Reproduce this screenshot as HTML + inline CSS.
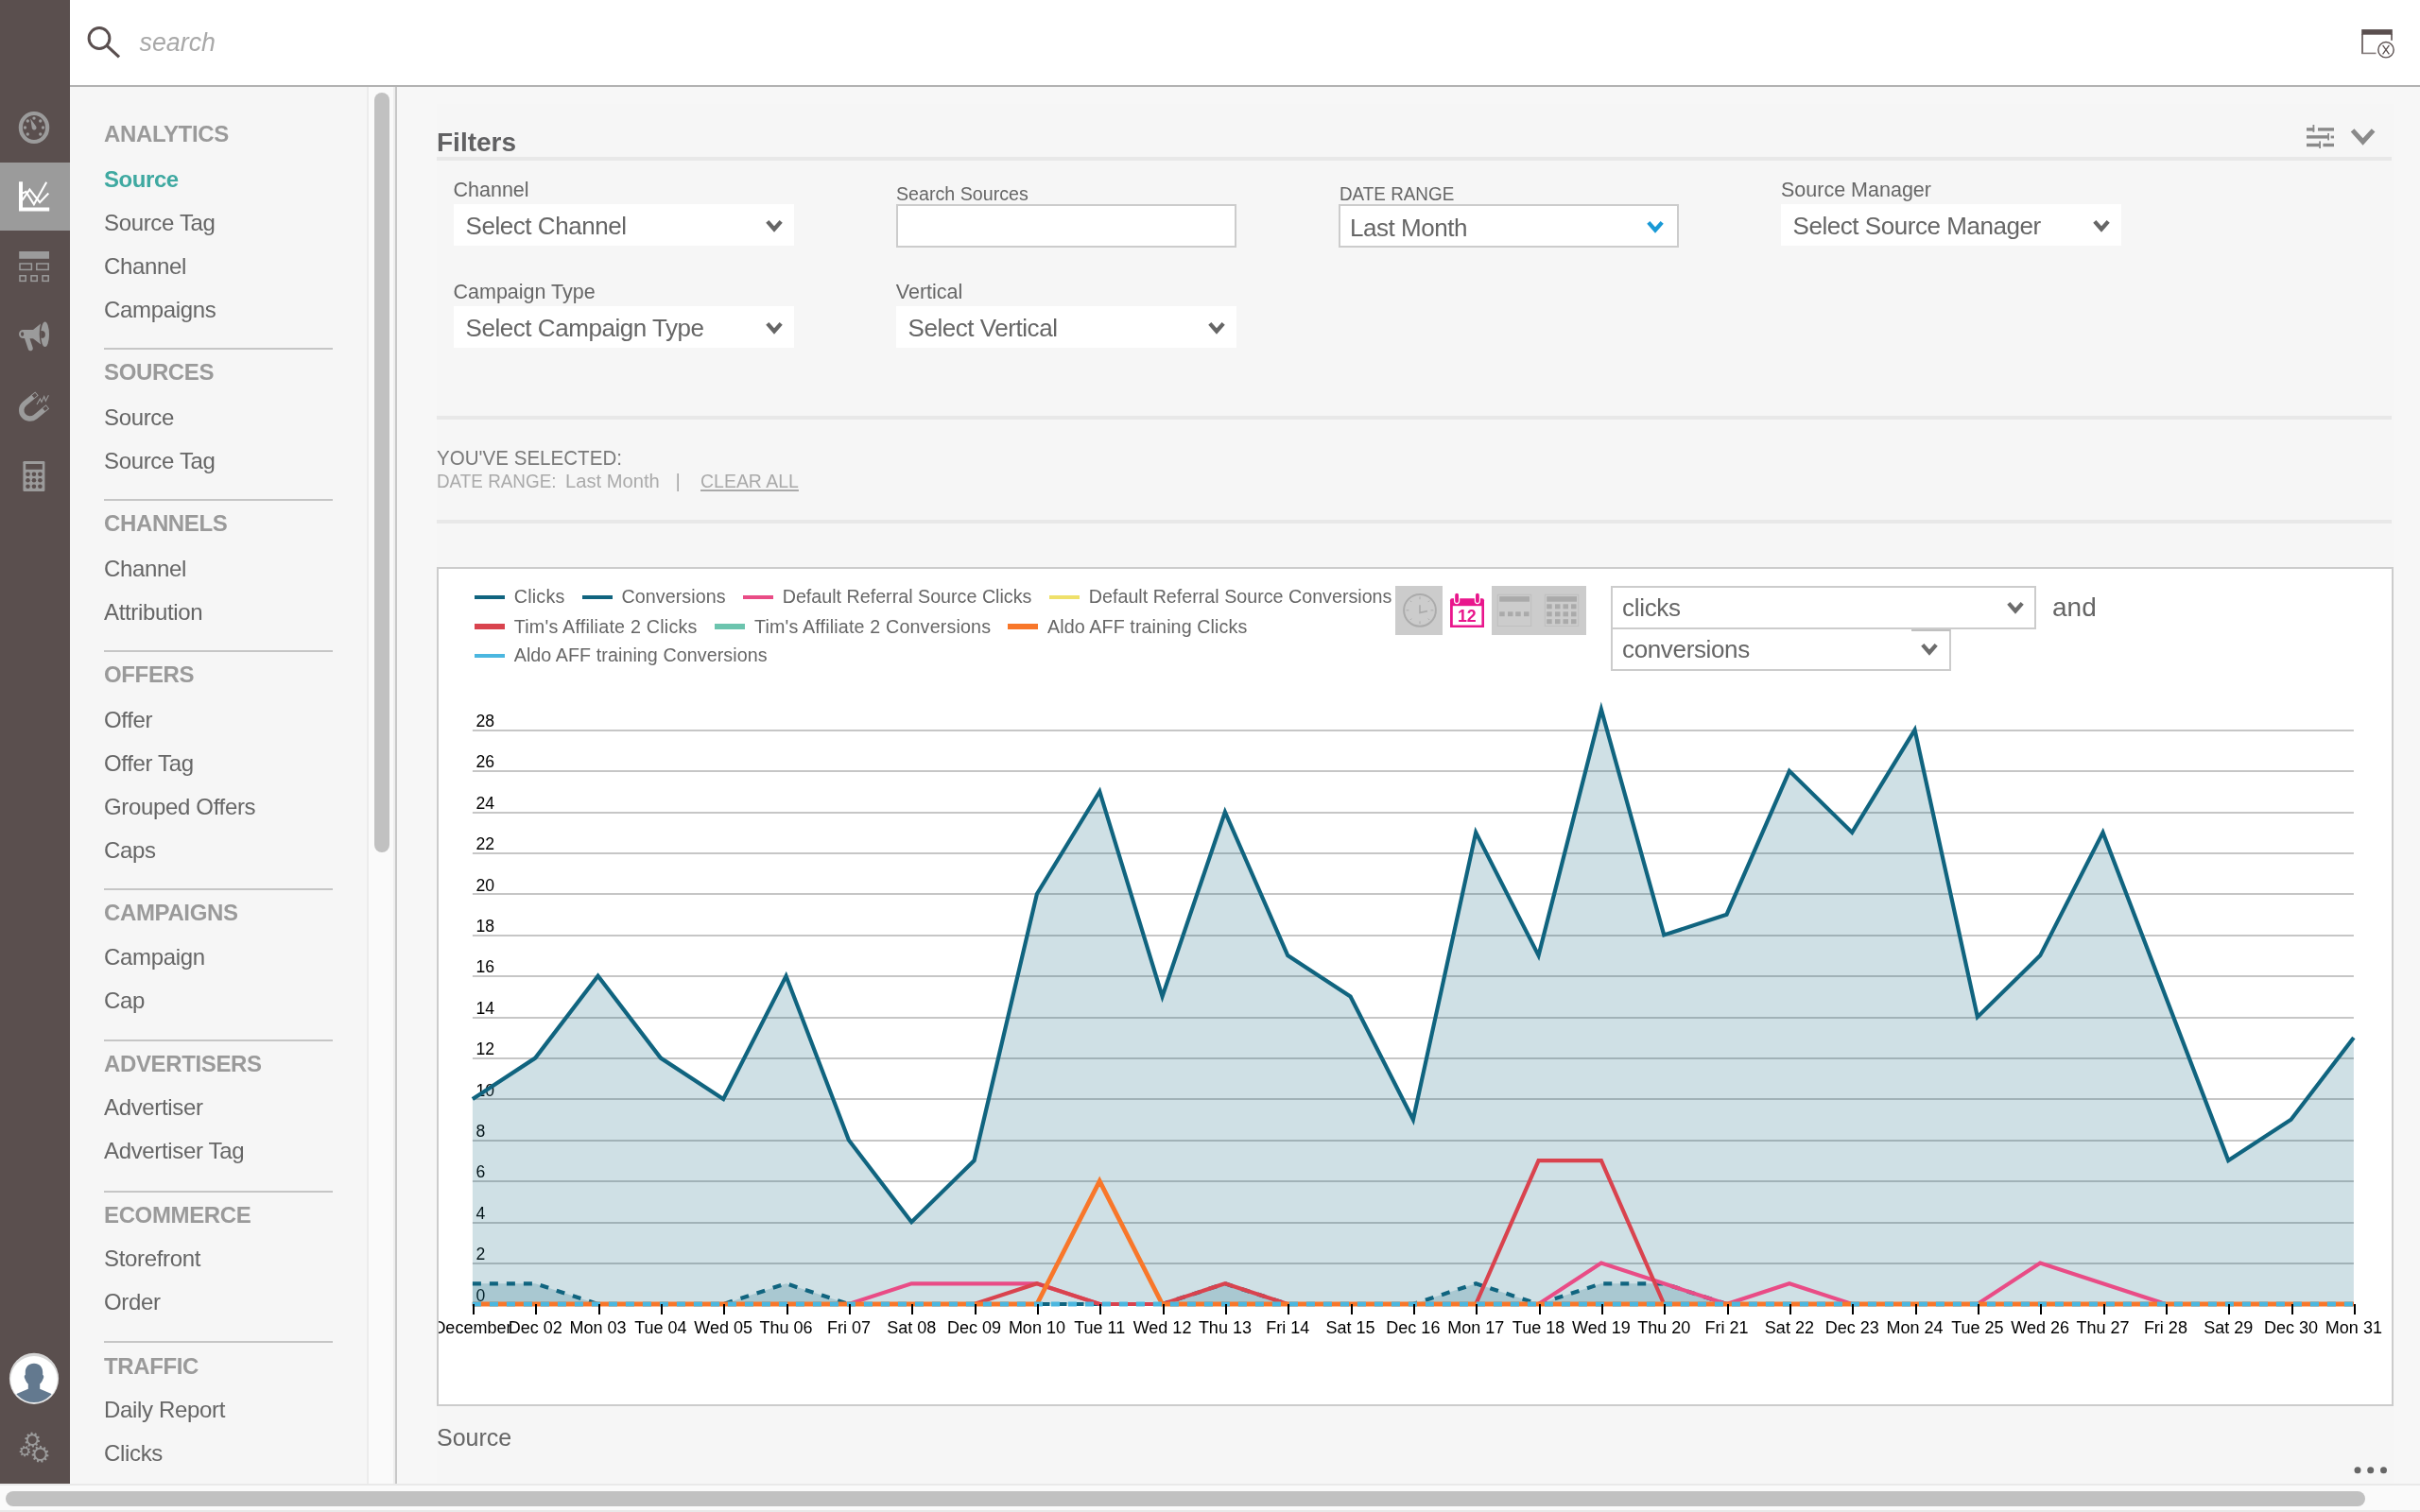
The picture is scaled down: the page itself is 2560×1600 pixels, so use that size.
<!DOCTYPE html>
<html><head><meta charset="utf-8"><title>Analytics - Source</title>
<style>
html,body{margin:0;padding:0;}
body{width:2560px;height:1600px;overflow:hidden;background:#f6f6f6;font-family:"Liberation Sans",sans-serif;position:relative;}
div{box-sizing:border-box;}
svg{position:absolute;overflow:visible;}
</style></head><body><div id="root" style="position:absolute;left:0;top:0;width:2560px;height:1600px;will-change:transform;">

<div style="position:absolute;left:74px;top:0px;width:2486px;height:90px;background:#ffffff;"></div>
<div style="position:absolute;left:74px;top:90px;width:2486px;height:2px;background:#b2b2b2;"></div>
<svg style="left:80px;top:20px" width="60" height="50" viewBox="80 20 60 50"><circle cx="105" cy="40.5" r="10.9" fill="none" stroke="#5a4f4f" stroke-width="3"/><line x1="113.3" y1="48.6" x2="126" y2="60.4" stroke="#5a4f4f" stroke-width="3.2"/></svg>
<div style="position:absolute;top:28px;font-size:26.8px;line-height:34px;color:#a9a9a9;white-space:nowrap;font-style:italic;left:147.5px;">search</div>
<svg style="left:2490px;top:24px" width="50" height="46" viewBox="2490 24 50 46">
<rect x="2498.2" y="31.1" width="32.6" height="5.6" fill="#5a4f4f"/>
<line x1="2499" y1="36" x2="2499" y2="57" stroke="#5a4f4f" stroke-width="1.6"/>
<line x1="2530" y1="36" x2="2530" y2="42.8" stroke="#5a4f4f" stroke-width="1.6"/>
<line x1="2498.2" y1="56.4" x2="2513.5" y2="56.4" stroke="#857c7c" stroke-width="1.6"/>
<circle cx="2524" cy="52.7" r="8.2" fill="#fff" stroke="#5a4f4f" stroke-width="1.4"/>
<path d="M2520.6 47.8 L2527.4 57.4 M2527.4 47.8 L2520.6 57.4" stroke="#5a4f4f" stroke-width="1.3" fill="none"/>
</svg>
<div style="position:absolute;left:0px;top:0px;width:74px;height:1570px;background:#5a4f4e;"></div>
<div style="position:absolute;left:0px;top:172px;width:74px;height:72px;background:#9b9b9b;"></div>
<svg style="left:10px;top:110px" width="54" height="54" viewBox="10 110 54 54">
<ellipse cx="36" cy="135" rx="14.15" ry="15.0" fill="none" stroke="#9b9b9b" stroke-width="4.2"/><circle cx="36.00" cy="125.10" r="1.7" fill="#9b9b9b"/><circle cx="42.72" cy="128.00" r="1.7" fill="#9b9b9b"/><circle cx="45.50" cy="135.00" r="1.7" fill="#9b9b9b"/><circle cx="42.72" cy="142.00" r="1.7" fill="#9b9b9b"/><circle cx="29.28" cy="142.00" r="1.7" fill="#9b9b9b"/><circle cx="26.50" cy="135.00" r="1.7" fill="#9b9b9b"/><circle cx="29.28" cy="128.00" r="1.7" fill="#9b9b9b"/>
<path d="M32.2 125.6 L38 133.6 A2.4 2.4 0 1 1 33.8 135.6 Z" fill="#9b9b9b"/>
</svg>
<svg style="left:10px;top:180px" width="54" height="54" viewBox="10 180 54 54">
<path d="M20 192.2 H24 V219.6 H52.2 V223.6 H20 Z" fill="#fff"/>
<path d="M23.5 204.6 L27.5 202.9 L35.9 216.3 L49.2 192.8" fill="none" stroke="#fff" stroke-width="2.1"/>
<path d="M23.5 212 L31.4 200.6 L42.1 214.2 L51.3 204.6" fill="none" stroke="#fff" stroke-width="2.1"/>
</svg>
<svg style="left:10px;top:255px" width="54" height="54" viewBox="10 255 54 54">
<rect x="20.2" y="266" width="31.8" height="7.8" fill="#9b9b9b"/>
<rect x="21" y="279" width="12.4" height="6.4" fill="none" stroke="#9b9b9b" stroke-width="1.5"/>
<rect x="38.8" y="279" width="12.4" height="6.4" fill="none" stroke="#9b9b9b" stroke-width="1.5"/>
<rect x="21" y="291.8" width="6.2" height="5.6" fill="none" stroke="#9b9b9b" stroke-width="1.5"/>
<rect x="33" y="291.8" width="6.2" height="5.6" fill="none" stroke="#9b9b9b" stroke-width="1.5"/>
<rect x="45" y="291.8" width="6.2" height="5.6" fill="none" stroke="#9b9b9b" stroke-width="1.5"/>
</svg>
<svg style="left:10px;top:328px" width="54" height="54" viewBox="10 328 54 54">
<path d="M24.5 349 H35 L43 342.5 C41.2 350 41.2 357 43.2 364.5 L35 358.2 H31.5 L34.8 368.2 A2.6 2.6 0 0 1 30 370 L26 358 H24.5 A4.5 4.5 0 0 1 24.5 349 Z" fill="#9b9b9b"/>
<ellipse cx="23.6" cy="353.5" rx="1.6" ry="2.2" fill="#5a4f4e"/>
<ellipse cx="47.6" cy="353.8" rx="4.4" ry="13.2" fill="#9b9b9b"/>
<path d="M43.2 350 H44 A3.9 3.9 0 0 1 44 357.8 H43.2 Z" fill="#5a4f4e"/>
</svg>
<svg style="left:10px;top:402px" width="54" height="54" viewBox="10 402 54 54">
<g transform="translate(31.7,434.1) rotate(-39.4)">
<path d="M0 -11.7 H16.8 V-6.249999999999999 H0 A6.249999999999999 6.249999999999999 0 0 0 0 6.249999999999999 H16.8 V11.7 H0 A11.7 11.7 0 0 1 0 -11.7 Z" fill="#9b9b9b"/>
<rect x="11.6" y="-10.799999999999999" width="4.300000000000001" height="3.6500000000000004" fill="#5a4f4e"/>
<rect x="11.6" y="7.1499999999999995" width="4.300000000000001" height="3.6500000000000004" fill="#5a4f4e"/>
</g>
<path d="M39 428.1 L42.45 422 L44 425.5 L46.7 419.6 L48.3 424.4 L51.4 418.2" fill="none" stroke="#9b9b9b" stroke-width="1.1"/>
</svg>
<svg style="left:10px;top:476px" width="54" height="54" viewBox="10 476 54 54">
<rect x="24.4" y="488" width="23" height="32" rx="1.2" fill="#9b9b9b"/>
<rect x="27.2" y="491" width="17.6" height="5.8" fill="#5a4f4e"/><circle cx="29.50" cy="501.80" r="2.3" fill="#5a4f4e"/><circle cx="35.95" cy="501.80" r="2.3" fill="#5a4f4e"/><circle cx="42.40" cy="501.80" r="2.3" fill="#5a4f4e"/><circle cx="29.50" cy="508.25" r="2.3" fill="#5a4f4e"/><circle cx="35.95" cy="508.25" r="2.3" fill="#5a4f4e"/><circle cx="42.40" cy="508.25" r="2.3" fill="#5a4f4e"/><circle cx="29.50" cy="514.70" r="2.3" fill="#5a4f4e"/><circle cx="35.95" cy="514.70" r="2.3" fill="#5a4f4e"/><circle cx="42.40" cy="514.70" r="2.3" fill="#5a4f4e"/>
</svg>
<svg style="left:8px;top:1430px" width="58" height="58" viewBox="8 1430 58 58">
<defs><clipPath id="av"><ellipse cx="36" cy="1459.6" rx="24.4" ry="24.4"/></clipPath></defs>
<ellipse cx="36" cy="1458.8" rx="26.1" ry="27.1" fill="#d6d6d6"/>
<ellipse cx="36" cy="1459.9" rx="24.8" ry="24.9" fill="#ffffff"/>
<g clip-path="url(#av)" fill="#63798f">
<path d="M36 1442.8 C41.6 1442.8 45.2 1446.6 45.2 1452 L45.2 1455 C46.4 1455 46.6 1457.2 45.6 1459 C44.8 1461.4 43.6 1463.4 42.2 1464.4 L42.2 1469.8 L58 1476.6 L58 1490 L14 1490 L14 1476.6 L29.8 1469.8 L29.8 1464.4 C28.4 1463.4 27.2 1461.4 26.4 1459 C25.4 1457.2 25.6 1455 26.8 1455 L26.8 1452 C26.8 1446.6 30.4 1442.8 36 1442.8 Z"/>
</g></svg>
<svg style="left:10px;top:1505px" width="54" height="54" viewBox="10 1505 54 54"><path d="M40.40 1523.60 L42.15 1524.50 L41.81 1526.07 L39.84 1526.17 L39.22 1527.24 L40.10 1529.00 L38.90 1530.07 L37.25 1529.00 L36.12 1529.50 L35.80 1531.44 L34.20 1531.60 L33.50 1529.76 L32.28 1529.50 L30.88 1530.88 L29.50 1530.07 L30.01 1528.17 L29.18 1527.24 L27.24 1527.54 L26.59 1526.07 L28.12 1524.84 L28.00 1523.60 L26.25 1522.70 L26.59 1521.13 L28.56 1521.03 L29.18 1519.96 L28.30 1518.20 L29.50 1517.13 L31.15 1518.20 L32.28 1517.70 L32.60 1515.76 L34.20 1515.60 L34.90 1517.44 L36.12 1517.70 L37.52 1516.32 L38.90 1517.13 L38.39 1519.03 L39.22 1519.96 L41.16 1519.66 L41.81 1521.13 L40.28 1522.36 Z M38.6 1523.6 A4.4 4.4 0 1 0 29.800000000000004 1523.6 A4.4 4.4 0 1 0 38.6 1523.6 Z" fill="#9b9b9b" fill-rule="evenodd"/><path d="M30.80 1535.60 L32.15 1536.33 L31.85 1537.58 L30.31 1537.61 L29.77 1538.43 L30.34 1539.86 L29.30 1540.62 L28.11 1539.66 L27.16 1539.93 L26.68 1541.39 L25.39 1541.31 L25.10 1539.80 L24.20 1539.41 L22.89 1540.22 L21.96 1539.33 L22.70 1537.98 L22.27 1537.10 L20.74 1536.88 L20.60 1535.60 L22.03 1535.05 L22.27 1534.10 L21.24 1532.95 L21.96 1531.87 L23.41 1532.37 L24.20 1531.79 L24.15 1530.25 L25.39 1529.89 L26.19 1531.21 L27.16 1531.27 L28.12 1530.06 L29.30 1530.58 L29.06 1532.10 L29.77 1532.77 L31.28 1532.46 L31.85 1533.62 L30.69 1534.63 Z M29.299999999999997 1535.6 A2.9 2.9 0 1 0 23.5 1535.6 A2.9 2.9 0 1 0 29.299999999999997 1535.6 Z" fill="#9b9b9b" fill-rule="evenodd"/><path d="M49.60 1538.80 L51.55 1539.72 L51.24 1541.34 L49.08 1541.45 L48.49 1542.58 L49.63 1544.42 L48.49 1545.60 L46.62 1544.53 L45.51 1545.17 L45.48 1547.33 L43.88 1547.71 L42.88 1545.79 L41.60 1545.73 L40.41 1547.53 L38.86 1546.99 L39.05 1544.84 L38.02 1544.09 L36.04 1544.96 L35.03 1543.67 L36.35 1541.96 L35.88 1540.77 L33.75 1540.44 L33.60 1538.80 L35.64 1538.08 L35.88 1536.83 L34.27 1535.39 L35.03 1533.93 L37.13 1534.43 L38.02 1533.51 L37.44 1531.43 L38.86 1530.61 L40.36 1532.17 L41.60 1531.87 L42.24 1529.81 L43.88 1529.89 L44.30 1532.01 L45.51 1532.43 L47.16 1531.04 L48.49 1532.00 L47.70 1534.01 L48.49 1535.02 L50.63 1534.74 L51.24 1536.26 L49.48 1537.53 Z M47.800000000000004 1538.8 A5.2 5.2 0 1 0 37.4 1538.8 A5.2 5.2 0 1 0 47.800000000000004 1538.8 Z" fill="#9b9b9b" fill-rule="evenodd"/></svg>
<div style="position:absolute;left:388px;top:92px;width:2px;height:1478px;background:#ececec;"></div>
<div style="position:absolute;left:390px;top:92px;width:26px;height:1478px;background:#fafafa;"></div>
<div style="position:absolute;left:396px;top:98px;width:16px;height:804px;background:#c1c1c1;border-radius:8px;"></div>
<div style="position:absolute;left:416px;top:92px;width:2px;height:1478px;background:#eeeeee;"></div>
<div style="position:absolute;left:418px;top:92px;width:2px;height:1478px;background:#c8c8c8;"></div>
<div style="position:absolute;top:126px;font-size:24px;line-height:31px;color:#9a9a9a;white-space:nowrap;font-weight:bold;letter-spacing:-0.37px;left:110px;">ANALYTICS</div>
<div style="position:absolute;top:174px;font-size:24px;line-height:31px;color:#3fa9a1;white-space:nowrap;font-weight:bold;letter-spacing:-0.44px;left:110px;">Source</div>
<div style="position:absolute;top:220px;font-size:24px;line-height:31px;color:#666;white-space:nowrap;letter-spacing:-0.34px;left:110px;">Source Tag</div>
<div style="position:absolute;top:266px;font-size:24px;line-height:31px;color:#666;white-space:nowrap;letter-spacing:-0.34px;left:110px;">Channel</div>
<div style="position:absolute;top:312px;font-size:24px;line-height:31px;color:#666;white-space:nowrap;letter-spacing:-0.34px;left:110px;">Campaigns</div>
<div style="position:absolute;left:110px;top:368px;width:242px;height:2px;background:#c6c6c6;"></div>
<div style="position:absolute;top:378px;font-size:24px;line-height:31px;color:#9a9a9a;white-space:nowrap;font-weight:bold;letter-spacing:-0.37px;left:110px;">SOURCES</div>
<div style="position:absolute;top:426px;font-size:24px;line-height:31px;color:#666;white-space:nowrap;letter-spacing:-0.34px;left:110px;">Source</div>
<div style="position:absolute;top:472px;font-size:24px;line-height:31px;color:#666;white-space:nowrap;letter-spacing:-0.34px;left:110px;">Source Tag</div>
<div style="position:absolute;left:110px;top:528px;width:242px;height:2px;background:#c6c6c6;"></div>
<div style="position:absolute;top:538px;font-size:24px;line-height:31px;color:#9a9a9a;white-space:nowrap;font-weight:bold;letter-spacing:-0.37px;left:110px;">CHANNELS</div>
<div style="position:absolute;top:586px;font-size:24px;line-height:31px;color:#666;white-space:nowrap;letter-spacing:-0.34px;left:110px;">Channel</div>
<div style="position:absolute;top:632px;font-size:24px;line-height:31px;color:#666;white-space:nowrap;letter-spacing:-0.34px;left:110px;">Attribution</div>
<div style="position:absolute;left:110px;top:688px;width:242px;height:2px;background:#c6c6c6;"></div>
<div style="position:absolute;top:698px;font-size:24px;line-height:31px;color:#9a9a9a;white-space:nowrap;font-weight:bold;letter-spacing:-0.37px;left:110px;">OFFERS</div>
<div style="position:absolute;top:746px;font-size:24px;line-height:31px;color:#666;white-space:nowrap;letter-spacing:-0.34px;left:110px;">Offer</div>
<div style="position:absolute;top:792px;font-size:24px;line-height:31px;color:#666;white-space:nowrap;letter-spacing:-0.34px;left:110px;">Offer Tag</div>
<div style="position:absolute;top:838px;font-size:24px;line-height:31px;color:#666;white-space:nowrap;letter-spacing:-0.34px;left:110px;">Grouped Offers</div>
<div style="position:absolute;top:884px;font-size:24px;line-height:31px;color:#666;white-space:nowrap;letter-spacing:-0.34px;left:110px;">Caps</div>
<div style="position:absolute;left:110px;top:940px;width:242px;height:2px;background:#c6c6c6;"></div>
<div style="position:absolute;top:950px;font-size:24px;line-height:31px;color:#9a9a9a;white-space:nowrap;font-weight:bold;letter-spacing:-0.37px;left:110px;">CAMPAIGNS</div>
<div style="position:absolute;top:997px;font-size:24px;line-height:31px;color:#666;white-space:nowrap;letter-spacing:-0.34px;left:110px;">Campaign</div>
<div style="position:absolute;top:1043px;font-size:24px;line-height:31px;color:#666;white-space:nowrap;letter-spacing:-0.34px;left:110px;">Cap</div>
<div style="position:absolute;left:110px;top:1100px;width:242px;height:2px;background:#c6c6c6;"></div>
<div style="position:absolute;top:1110px;font-size:24px;line-height:31px;color:#9a9a9a;white-space:nowrap;font-weight:bold;letter-spacing:-0.37px;left:110px;">ADVERTISERS</div>
<div style="position:absolute;top:1156px;font-size:24px;line-height:31px;color:#666;white-space:nowrap;letter-spacing:-0.34px;left:110px;">Advertiser</div>
<div style="position:absolute;top:1202px;font-size:24px;line-height:31px;color:#666;white-space:nowrap;letter-spacing:-0.34px;left:110px;">Advertiser Tag</div>
<div style="position:absolute;left:110px;top:1260px;width:242px;height:2px;background:#c6c6c6;"></div>
<div style="position:absolute;top:1270px;font-size:24px;line-height:31px;color:#9a9a9a;white-space:nowrap;font-weight:bold;letter-spacing:-0.37px;left:110px;">ECOMMERCE</div>
<div style="position:absolute;top:1316px;font-size:24px;line-height:31px;color:#666;white-space:nowrap;letter-spacing:-0.34px;left:110px;">Storefront</div>
<div style="position:absolute;top:1362px;font-size:24px;line-height:31px;color:#666;white-space:nowrap;letter-spacing:-0.34px;left:110px;">Order</div>
<div style="position:absolute;left:110px;top:1419px;width:242px;height:2px;background:#c6c6c6;"></div>
<div style="position:absolute;top:1430px;font-size:24px;line-height:31px;color:#9a9a9a;white-space:nowrap;font-weight:bold;letter-spacing:-0.37px;left:110px;">TRAFFIC</div>
<div style="position:absolute;top:1476px;font-size:24px;line-height:31px;color:#666;white-space:nowrap;letter-spacing:-0.34px;left:110px;">Daily Report</div>
<div style="position:absolute;top:1522px;font-size:24px;line-height:31px;color:#666;white-space:nowrap;letter-spacing:-0.34px;left:110px;">Clicks</div>
<div style="position:absolute;left:0px;top:1570px;width:2560px;height:30px;background:#fafafa;border-top:2px solid #e9e9e9;border-bottom:2px solid #e9e9e9;"></div>
<div style="position:absolute;left:6px;top:1578px;width:2496px;height:16px;background:#c1c1c1;border-radius:8px;"></div>
<div style="position:absolute;left:420px;top:92px;width:2140px;height:1478px;background:#f7f7f7;"></div>
<div style="position:absolute;left:462px;top:110px;width:2070px;height:1460px;background:#f6f6f6;"></div>
<div style="position:absolute;top:133px;font-size:28px;line-height:35px;color:#616163;white-space:nowrap;font-weight:bold;left:462px;">Filters</div>
<div style="position:absolute;left:462px;top:166px;width:2068px;height:4px;background:#e8e8e8;"></div>
<svg style="left:2436px;top:128px" width="84" height="34" viewBox="2436 128 84 34">
<g fill="#8a8a8a">
<rect x="2440" y="135.2" width="8.2" height="3.4"/><rect x="2446.5" y="132" width="1.8" height="7.8"/><rect x="2452" y="135.2" width="17" height="3.4"/>
<rect x="2440" y="143.2" width="23.8" height="3.4"/><rect x="2462.2" y="141" width="1.8" height="7.4"/><rect x="2465.6" y="143.6" width="3.4" height="2.8"/>
<rect x="2440" y="151.8" width="14.8" height="3.4"/><rect x="2453.2" y="149.4" width="1.8" height="7.6"/><rect x="2457.4" y="151.8" width="11.6" height="3.4"/>
</g>
<path d="M2488.6 137.8 L2499.6 150 L2510.6 137.8" fill="none" stroke="#8a8a8a" stroke-width="5"/>
</svg>
<div style="position:absolute;top:187px;font-size:21.5px;line-height:28px;color:#666;white-space:nowrap;left:479.5px;">Channel</div>
<div style="position:absolute;left:480px;top:216px;width:360px;height:44px;background:#fff;"></div><div style="position:absolute;top:222px;font-size:26px;line-height:34px;color:#666;white-space:nowrap;letter-spacing:-0.45px;left:492.5px;">Select Channel</div><svg style="left:807px;top:229.0px" width="24" height="20" viewBox="807 229.0 24 20"><path d="M811.8 234.3 L819 242.5 L826.2 234.3" fill="none" stroke="#666" stroke-width="4.2"/></svg>
<div style="position:absolute;top:191px;font-size:20.5px;line-height:27px;color:#666;white-space:nowrap;left:947.8px;transform:scaleX(0.959);transform-origin:0 0;">Search Sources</div>
<div style="position:absolute;left:948px;top:216px;width:360px;height:45.5px;background:#fff;border:2px solid #ccc;"></div>
<div style="position:absolute;top:191px;font-size:20.5px;line-height:27px;color:#666;white-space:nowrap;left:1416.6px;transform:scaleX(0.92);transform-origin:0 0;">DATE RANGE</div>
<div style="position:absolute;left:1416px;top:216px;width:360px;height:45.5px;background:#fff;border:2px solid #ccc;"></div><div style="position:absolute;top:224px;font-size:26px;line-height:34px;color:#666;white-space:nowrap;letter-spacing:-0.45px;left:1428px;">Last Month</div><svg style="left:1739px;top:229.75px" width="24" height="20" viewBox="1739 229.75 24 20"><path d="M1743.8 235.05 L1751 243.25 L1758.2 235.05" fill="none" stroke="#1a9ad6" stroke-width="4.2"/></svg>
<div style="position:absolute;top:187px;font-size:21.5px;line-height:28px;color:#666;white-space:nowrap;left:1884px;">Source Manager</div>
<div style="position:absolute;left:1884px;top:216px;width:359.5px;height:44px;background:#fff;"></div><div style="position:absolute;top:222px;font-size:26px;line-height:34px;color:#666;white-space:nowrap;letter-spacing:-0.45px;left:1896.5px;">Select Source Manager</div><svg style="left:2210.5px;top:229.0px" width="24" height="20" viewBox="2210.5 229.0 24 20"><path d="M2215.3 234.3 L2222.5 242.5 L2229.7 234.3" fill="none" stroke="#666" stroke-width="4.2"/></svg>
<div style="position:absolute;top:295px;font-size:21.5px;line-height:28px;color:#666;white-space:nowrap;left:479.5px;">Campaign Type</div>
<div style="position:absolute;left:480px;top:324px;width:360px;height:44px;background:#fff;"></div><div style="position:absolute;top:330px;font-size:26px;line-height:34px;color:#666;white-space:nowrap;letter-spacing:-0.45px;left:492.5px;">Select Campaign Type</div><svg style="left:807px;top:337.0px" width="24" height="20" viewBox="807 337.0 24 20"><path d="M811.8 342.3 L819 350.5 L826.2 342.3" fill="none" stroke="#666" stroke-width="4.2"/></svg>
<div style="position:absolute;top:295px;font-size:21.5px;line-height:28px;color:#666;white-space:nowrap;left:947.8px;">Vertical</div>
<div style="position:absolute;left:948px;top:324px;width:360px;height:44px;background:#fff;"></div><div style="position:absolute;top:330px;font-size:26px;line-height:34px;color:#666;white-space:nowrap;letter-spacing:-0.45px;left:960.5px;">Select Vertical</div><svg style="left:1275px;top:337.0px" width="24" height="20" viewBox="1275 337.0 24 20"><path d="M1279.8 342.3 L1287 350.5 L1294.2 342.3" fill="none" stroke="#666" stroke-width="4.2"/></svg>
<div style="position:absolute;left:462px;top:440px;width:2068px;height:4px;background:#e8e8e8;"></div>
<div style="position:absolute;top:470px;font-size:22px;line-height:29px;color:#7a7a7a;white-space:nowrap;left:462px;transform:scaleX(0.935);transform-origin:0 0;">YOU'VE SELECTED:</div>
<div style="position:absolute;top:495px;font-size:20.5px;line-height:27px;color:#aaa;white-space:nowrap;left:462px;transform:scaleX(0.92);transform-origin:0 0;">DATE RANGE:</div>
<div style="position:absolute;top:495px;font-size:20.5px;line-height:27px;color:#aaa;white-space:nowrap;left:598.4px;transform:scaleX(0.984);transform-origin:0 0;">Last Month</div>
<div style="position:absolute;top:495px;font-size:20.5px;line-height:27px;color:#aaa;white-space:nowrap;left:714.5px;">|</div>
<div style="position:absolute;top:495px;font-size:20.5px;line-height:27px;color:#aaa;white-space:nowrap;left:741px;transform:scaleX(0.95);transform-origin:0 0;"><span style="text-decoration:underline">CLEAR ALL</span></div>
<div style="position:absolute;left:462px;top:550px;width:2068px;height:4px;background:#e8e8e8;"></div>
<div style="position:absolute;left:462px;top:600px;width:2070px;height:888px;background:#fff;border:2px solid #ccc;"></div>
<svg style="left:0;top:0" width="2560" height="1600" viewBox="0 0 2560 1600"><rect x="499.9" y="1336" width="1990.0" height="2" fill="#c6c6c6"/><rect x="499.9" y="1293" width="1990.0" height="2" fill="#c6c6c6"/><rect x="499.9" y="1249" width="1990.0" height="2" fill="#c6c6c6"/><rect x="499.9" y="1206" width="1990.0" height="2" fill="#c6c6c6"/><rect x="499.9" y="1162" width="1990.0" height="2" fill="#c6c6c6"/><rect x="499.9" y="1119" width="1990.0" height="2" fill="#c6c6c6"/><rect x="499.9" y="1076" width="1990.0" height="2" fill="#c6c6c6"/><rect x="499.9" y="1032" width="1990.0" height="2" fill="#c6c6c6"/><rect x="499.9" y="989" width="1990.0" height="2" fill="#c6c6c6"/><rect x="499.9" y="945" width="1990.0" height="2" fill="#c6c6c6"/><rect x="499.9" y="902" width="1990.0" height="2" fill="#c6c6c6"/><rect x="499.9" y="859" width="1990.0" height="2" fill="#c6c6c6"/><rect x="499.9" y="815" width="1990.0" height="2" fill="#c6c6c6"/><rect x="499.9" y="772" width="1990.0" height="2" fill="#c6c6c6"/><text x="503.5" y="1376.6" font-size="17.6" fill="#000" font-family="Liberation Sans, sans-serif">0</text><text x="503.5" y="1333.2" font-size="17.6" fill="#000" font-family="Liberation Sans, sans-serif">2</text><text x="503.5" y="1289.8" font-size="17.6" fill="#000" font-family="Liberation Sans, sans-serif">4</text><text x="503.5" y="1246.4" font-size="17.6" fill="#000" font-family="Liberation Sans, sans-serif">6</text><text x="503.5" y="1203.0" font-size="17.6" fill="#000" font-family="Liberation Sans, sans-serif">8</text><text x="503.5" y="1159.6" font-size="17.6" fill="#000" font-family="Liberation Sans, sans-serif">10</text><text x="503.5" y="1116.2" font-size="17.6" fill="#000" font-family="Liberation Sans, sans-serif">12</text><text x="503.5" y="1072.8" font-size="17.6" fill="#000" font-family="Liberation Sans, sans-serif">14</text><text x="503.5" y="1029.4" font-size="17.6" fill="#000" font-family="Liberation Sans, sans-serif">16</text><text x="503.5" y="986.0" font-size="17.6" fill="#000" font-family="Liberation Sans, sans-serif">18</text><text x="503.5" y="942.6" font-size="17.6" fill="#000" font-family="Liberation Sans, sans-serif">20</text><text x="503.5" y="899.2" font-size="17.6" fill="#000" font-family="Liberation Sans, sans-serif">22</text><text x="503.5" y="855.8" font-size="17.6" fill="#000" font-family="Liberation Sans, sans-serif">24</text><text x="503.5" y="812.4" font-size="17.6" fill="#000" font-family="Liberation Sans, sans-serif">26</text><text x="503.5" y="769.0" font-size="17.6" fill="#000" font-family="Liberation Sans, sans-serif">28</text><polygon points="499.90,1380.00 499.90,1163.00 566.23,1119.60 632.57,1032.80 698.90,1119.60 765.23,1163.00 831.56,1032.80 897.90,1206.40 964.23,1293.20 1030.56,1228.10 1096.90,946.00 1163.23,837.50 1229.56,1054.50 1295.90,859.20 1362.23,1011.10 1428.56,1054.50 1494.89,1184.70 1561.23,880.90 1627.56,1011.10 1693.89,750.70 1760.23,989.40 1826.56,967.70 1892.89,815.80 1959.23,880.90 2025.56,772.40 2091.89,1076.20 2158.22,1011.10 2224.56,880.90 2290.89,1054.50 2357.22,1228.10 2423.56,1184.70 2489.89,1097.90 2489.89,1380.00" fill="#10647f" fill-opacity="0.2"/><polygon points="499.90,1380.00 499.90,1358.30 566.23,1358.30 632.57,1380.00 698.90,1380.00 765.23,1380.00 831.56,1358.30 897.90,1380.00 964.23,1380.00 1030.56,1380.00 1096.90,1380.00 1163.23,1380.00 1229.56,1380.00 1295.90,1358.30 1362.23,1380.00 1428.56,1380.00 1494.89,1380.00 1561.23,1358.30 1627.56,1380.00 1693.89,1358.30 1760.23,1358.30 1826.56,1380.00 1892.89,1380.00 1959.23,1380.00 2025.56,1380.00 2091.89,1380.00 2158.22,1380.00 2224.56,1380.00 2290.89,1380.00 2357.22,1380.00 2423.56,1380.00 2489.89,1380.00 2489.89,1380.00" fill="#10647f" fill-opacity="0.2"/><polygon points="499.90,1380.00 499.90,1380.00 566.23,1380.00 632.57,1380.00 698.90,1380.00 765.23,1380.00 831.56,1380.00 897.90,1380.00 964.23,1358.30 1030.56,1358.30 1096.90,1358.30 1163.23,1380.00 1229.56,1380.00 1295.90,1380.00 1362.23,1380.00 1428.56,1380.00 1494.89,1380.00 1561.23,1380.00 1627.56,1380.00 1693.89,1336.60 1760.23,1358.30 1826.56,1380.00 1892.89,1358.30 1959.23,1380.00 2025.56,1380.00 2091.89,1380.00 2158.22,1336.60 2224.56,1358.30 2290.89,1380.00 2357.22,1380.00 2423.56,1380.00 2489.89,1380.00 2489.89,1380.00" fill="#e94c86" fill-opacity="0.0"/><polyline points="499.90,1163.00 566.23,1119.60 632.57,1032.80 698.90,1119.60 765.23,1163.00 831.56,1032.80 897.90,1206.40 964.23,1293.20 1030.56,1228.10 1096.90,946.00 1163.23,837.50 1229.56,1054.50 1295.90,859.20 1362.23,1011.10 1428.56,1054.50 1494.89,1184.70 1561.23,880.90 1627.56,1011.10 1693.89,750.70 1760.23,989.40 1826.56,967.70 1892.89,815.80 1959.23,880.90 2025.56,772.40 2091.89,1076.20 2158.22,1011.10 2224.56,880.90 2290.89,1054.50 2357.22,1228.10 2423.56,1184.70 2489.89,1097.90" fill="none" stroke="#10647f" stroke-width="4.2" stroke-linejoin="miter"/><polyline points="499.90,1358.30 566.23,1358.30 632.57,1380.00 698.90,1380.00 765.23,1380.00 831.56,1358.30 897.90,1380.00 964.23,1380.00 1030.56,1380.00 1096.90,1380.00 1163.23,1380.00 1229.56,1380.00 1295.90,1358.30 1362.23,1380.00 1428.56,1380.00 1494.89,1380.00 1561.23,1358.30 1627.56,1380.00 1693.89,1358.30 1760.23,1358.30 1826.56,1380.00 1892.89,1380.00 1959.23,1380.00 2025.56,1380.00 2091.89,1380.00 2158.22,1380.00 2224.56,1380.00 2290.89,1380.00 2357.22,1380.00 2423.56,1380.00 2489.89,1380.00" fill="none" stroke="#10647f" stroke-width="4.2" stroke-linejoin="miter" stroke-dasharray="9,9" stroke-dashoffset="0"/><polyline points="499.90,1380.00 566.23,1380.00 632.57,1380.00 698.90,1380.00 765.23,1380.00 831.56,1380.00 897.90,1380.00 964.23,1358.30 1030.56,1358.30 1096.90,1358.30 1163.23,1380.00 1229.56,1380.00 1295.90,1380.00 1362.23,1380.00 1428.56,1380.00 1494.89,1380.00 1561.23,1380.00 1627.56,1380.00 1693.89,1336.60 1760.23,1358.30 1826.56,1380.00 1892.89,1358.30 1959.23,1380.00 2025.56,1380.00 2091.89,1380.00 2158.22,1336.60 2224.56,1358.30 2290.89,1380.00 2357.22,1380.00 2423.56,1380.00 2489.89,1380.00" fill="none" stroke="#e94c86" stroke-width="4.2" stroke-linejoin="miter"/><polyline points="499.90,1380.00 566.23,1380.00 632.57,1380.00 698.90,1380.00 765.23,1380.00 831.56,1380.00 897.90,1380.00 964.23,1380.00 1030.56,1380.00 1096.90,1380.00 1163.23,1380.00 1229.56,1380.00 1295.90,1380.00 1362.23,1380.00 1428.56,1380.00 1494.89,1380.00 1561.23,1380.00 1627.56,1380.00 1693.89,1380.00 1760.23,1380.00 1826.56,1380.00 1892.89,1380.00 1959.23,1380.00 2025.56,1380.00 2091.89,1380.00 2158.22,1380.00 2224.56,1380.00 2290.89,1380.00 2357.22,1380.00 2423.56,1380.00 2489.89,1380.00" fill="none" stroke="#efe06a" stroke-width="4.2" stroke-linejoin="miter" stroke-dasharray="9,9" stroke-dashoffset="0"/><polyline points="499.90,1380.00 566.23,1380.00 632.57,1380.00 698.90,1380.00 765.23,1380.00 831.56,1380.00 897.90,1380.00 964.23,1380.00 1030.56,1380.00 1096.90,1358.30 1163.23,1380.00 1229.56,1380.00 1295.90,1358.30 1362.23,1380.00 1428.56,1380.00 1494.89,1380.00 1561.23,1380.00 1627.56,1228.10 1693.89,1228.10 1760.23,1380.00 1826.56,1380.00 1892.89,1380.00 1959.23,1380.00 2025.56,1380.00 2091.89,1380.00 2158.22,1380.00 2224.56,1380.00 2290.89,1380.00 2357.22,1380.00 2423.56,1380.00 2489.89,1380.00" fill="none" stroke="#d9434e" stroke-width="4.2" stroke-linejoin="miter"/><polyline points="499.90,1380.00 566.23,1380.00 632.57,1380.00 698.90,1380.00 765.23,1380.00 831.56,1380.00 897.90,1380.00 964.23,1380.00 1030.56,1380.00 1096.90,1380.00 1163.23,1380.00 1229.56,1380.00 1295.90,1380.00 1362.23,1380.00 1428.56,1380.00 1494.89,1380.00 1561.23,1380.00 1627.56,1380.00 1693.89,1380.00 1760.23,1380.00 1826.56,1380.00 1892.89,1380.00 1959.23,1380.00 2025.56,1380.00 2091.89,1380.00 2158.22,1380.00 2224.56,1380.00 2290.89,1380.00 2357.22,1380.00 2423.56,1380.00 2489.89,1380.00" fill="none" stroke="#6cc4ae" stroke-width="4.2" stroke-linejoin="miter" stroke-dasharray="9,9" stroke-dashoffset="0"/><polyline points="499.90,1380.00 566.23,1380.00 632.57,1380.00 698.90,1380.00 765.23,1380.00 831.56,1380.00 897.90,1380.00 964.23,1380.00 1030.56,1380.00 1096.90,1380.00 1163.23,1249.80 1229.56,1380.00 1295.90,1380.00 1362.23,1380.00 1428.56,1380.00 1494.89,1380.00 1561.23,1380.00 1627.56,1380.00 1693.89,1380.00 1760.23,1380.00 1826.56,1380.00 1892.89,1380.00 1959.23,1380.00 2025.56,1380.00 2091.89,1380.00 2158.22,1380.00 2224.56,1380.00 2290.89,1380.00 2357.22,1380.00 2423.56,1380.00 2489.89,1380.00" fill="none" stroke="#f8772a" stroke-width="4.8" stroke-linejoin="miter"/><polyline points="499.90,1380.00 566.23,1380.00 632.57,1380.00 698.90,1380.00 765.23,1380.00 831.56,1380.00 897.90,1380.00 964.23,1380.00 1030.56,1380.00 1096.90,1380.00 1163.23,1380.00 1229.56,1380.00 1295.90,1380.00 1362.23,1380.00 1428.56,1380.00 1494.89,1380.00 1561.23,1380.00 1627.56,1380.00 1693.89,1380.00 1760.23,1380.00 1826.56,1380.00 1892.89,1380.00 1959.23,1380.00 2025.56,1380.00 2091.89,1380.00 2158.22,1380.00 2224.56,1380.00 2290.89,1380.00 2357.22,1380.00 2423.56,1380.00 2489.89,1380.00" fill="none" stroke="#4bb7e0" stroke-width="4.8" stroke-linejoin="miter" stroke-dasharray="9,9" stroke-dashoffset="0"/><clipPath id="cb"><rect x="464" y="602" width="2066" height="884"/></clipPath><g clip-path="url(#cb)"><rect x="500" y="1380.0" width="2" height="11" fill="#000"/><text x="499.90" y="1410.5" text-anchor="middle" font-size="18" fill="#000" font-family="Liberation Sans, sans-serif">December</text><rect x="566" y="1380.0" width="2" height="11" fill="#000"/><text x="566.23" y="1410.5" text-anchor="middle" font-size="18" fill="#000" font-family="Liberation Sans, sans-serif">Dec 02</text><rect x="633" y="1380.0" width="2" height="11" fill="#000"/><text x="632.57" y="1410.5" text-anchor="middle" font-size="18" fill="#000" font-family="Liberation Sans, sans-serif">Mon 03</text><rect x="699" y="1380.0" width="2" height="11" fill="#000"/><text x="698.90" y="1410.5" text-anchor="middle" font-size="18" fill="#000" font-family="Liberation Sans, sans-serif">Tue 04</text><rect x="765" y="1380.0" width="2" height="11" fill="#000"/><text x="765.23" y="1410.5" text-anchor="middle" font-size="18" fill="#000" font-family="Liberation Sans, sans-serif">Wed 05</text><rect x="832" y="1380.0" width="2" height="11" fill="#000"/><text x="831.56" y="1410.5" text-anchor="middle" font-size="18" fill="#000" font-family="Liberation Sans, sans-serif">Thu 06</text><rect x="898" y="1380.0" width="2" height="11" fill="#000"/><text x="897.90" y="1410.5" text-anchor="middle" font-size="18" fill="#000" font-family="Liberation Sans, sans-serif">Fri 07</text><rect x="964" y="1380.0" width="2" height="11" fill="#000"/><text x="964.23" y="1410.5" text-anchor="middle" font-size="18" fill="#000" font-family="Liberation Sans, sans-serif">Sat 08</text><rect x="1031" y="1380.0" width="2" height="11" fill="#000"/><text x="1030.56" y="1410.5" text-anchor="middle" font-size="18" fill="#000" font-family="Liberation Sans, sans-serif">Dec 09</text><rect x="1097" y="1380.0" width="2" height="11" fill="#000"/><text x="1096.90" y="1410.5" text-anchor="middle" font-size="18" fill="#000" font-family="Liberation Sans, sans-serif">Mon 10</text><rect x="1163" y="1380.0" width="2" height="11" fill="#000"/><text x="1163.23" y="1410.5" text-anchor="middle" font-size="18" fill="#000" font-family="Liberation Sans, sans-serif">Tue 11</text><rect x="1230" y="1380.0" width="2" height="11" fill="#000"/><text x="1229.56" y="1410.5" text-anchor="middle" font-size="18" fill="#000" font-family="Liberation Sans, sans-serif">Wed 12</text><rect x="1296" y="1380.0" width="2" height="11" fill="#000"/><text x="1295.90" y="1410.5" text-anchor="middle" font-size="18" fill="#000" font-family="Liberation Sans, sans-serif">Thu 13</text><rect x="1362" y="1380.0" width="2" height="11" fill="#000"/><text x="1362.23" y="1410.5" text-anchor="middle" font-size="18" fill="#000" font-family="Liberation Sans, sans-serif">Fri 14</text><rect x="1429" y="1380.0" width="2" height="11" fill="#000"/><text x="1428.56" y="1410.5" text-anchor="middle" font-size="18" fill="#000" font-family="Liberation Sans, sans-serif">Sat 15</text><rect x="1495" y="1380.0" width="2" height="11" fill="#000"/><text x="1494.89" y="1410.5" text-anchor="middle" font-size="18" fill="#000" font-family="Liberation Sans, sans-serif">Dec 16</text><rect x="1561" y="1380.0" width="2" height="11" fill="#000"/><text x="1561.23" y="1410.5" text-anchor="middle" font-size="18" fill="#000" font-family="Liberation Sans, sans-serif">Mon 17</text><rect x="1628" y="1380.0" width="2" height="11" fill="#000"/><text x="1627.56" y="1410.5" text-anchor="middle" font-size="18" fill="#000" font-family="Liberation Sans, sans-serif">Tue 18</text><rect x="1694" y="1380.0" width="2" height="11" fill="#000"/><text x="1693.89" y="1410.5" text-anchor="middle" font-size="18" fill="#000" font-family="Liberation Sans, sans-serif">Wed 19</text><rect x="1760" y="1380.0" width="2" height="11" fill="#000"/><text x="1760.23" y="1410.5" text-anchor="middle" font-size="18" fill="#000" font-family="Liberation Sans, sans-serif">Thu 20</text><rect x="1827" y="1380.0" width="2" height="11" fill="#000"/><text x="1826.56" y="1410.5" text-anchor="middle" font-size="18" fill="#000" font-family="Liberation Sans, sans-serif">Fri 21</text><rect x="1893" y="1380.0" width="2" height="11" fill="#000"/><text x="1892.89" y="1410.5" text-anchor="middle" font-size="18" fill="#000" font-family="Liberation Sans, sans-serif">Sat 22</text><rect x="1959" y="1380.0" width="2" height="11" fill="#000"/><text x="1959.23" y="1410.5" text-anchor="middle" font-size="18" fill="#000" font-family="Liberation Sans, sans-serif">Dec 23</text><rect x="2026" y="1380.0" width="2" height="11" fill="#000"/><text x="2025.56" y="1410.5" text-anchor="middle" font-size="18" fill="#000" font-family="Liberation Sans, sans-serif">Mon 24</text><rect x="2092" y="1380.0" width="2" height="11" fill="#000"/><text x="2091.89" y="1410.5" text-anchor="middle" font-size="18" fill="#000" font-family="Liberation Sans, sans-serif">Tue 25</text><rect x="2158" y="1380.0" width="2" height="11" fill="#000"/><text x="2158.22" y="1410.5" text-anchor="middle" font-size="18" fill="#000" font-family="Liberation Sans, sans-serif">Wed 26</text><rect x="2225" y="1380.0" width="2" height="11" fill="#000"/><text x="2224.56" y="1410.5" text-anchor="middle" font-size="18" fill="#000" font-family="Liberation Sans, sans-serif">Thu 27</text><rect x="2291" y="1380.0" width="2" height="11" fill="#000"/><text x="2290.89" y="1410.5" text-anchor="middle" font-size="18" fill="#000" font-family="Liberation Sans, sans-serif">Fri 28</text><rect x="2357" y="1380.0" width="2" height="11" fill="#000"/><text x="2357.22" y="1410.5" text-anchor="middle" font-size="18" fill="#000" font-family="Liberation Sans, sans-serif">Sat 29</text><rect x="2424" y="1380.0" width="2" height="11" fill="#000"/><text x="2423.56" y="1410.5" text-anchor="middle" font-size="18" fill="#000" font-family="Liberation Sans, sans-serif">Dec 30</text><rect x="2490" y="1380.0" width="2" height="11" fill="#000"/><text x="2489.89" y="1410.5" text-anchor="middle" font-size="18" fill="#000" font-family="Liberation Sans, sans-serif">Mon 31</text></g></svg>
<div style="position:absolute;left:501.7px;top:630px;width:32.3px;height:4px;background:#10647f;"></div><div style="position:absolute;top:618px;font-size:19.7px;line-height:26px;color:#666;white-space:nowrap;letter-spacing:0.23px;left:543.7px;">Clicks</div>
<div style="position:absolute;left:615.6px;top:630px;width:32.3px;height:4px;background:#10647f;"></div><div style="position:absolute;top:618px;font-size:19.7px;line-height:26px;color:#666;white-space:nowrap;letter-spacing:0.05px;left:657.6px;">Conversions</div>
<div style="position:absolute;left:785.7px;top:630px;width:32.3px;height:4px;background:#e94c86;"></div><div style="position:absolute;top:618px;font-size:19.7px;line-height:26px;color:#666;white-space:nowrap;letter-spacing:0.0px;left:827.7px;">Default Referral Source Clicks</div>
<div style="position:absolute;left:1109.8px;top:630px;width:32.3px;height:4px;background:#efe06a;"></div><div style="position:absolute;top:618px;font-size:19.7px;line-height:26px;color:#666;white-space:nowrap;letter-spacing:0.0px;left:1151.8px;">Default Referral Source Conversions</div>
<div style="position:absolute;left:501.7px;top:660px;width:32.3px;height:6px;background:#d9434e;"></div><div style="position:absolute;top:650px;font-size:19.7px;line-height:26px;color:#666;white-space:nowrap;letter-spacing:0.22px;left:543.7px;">Tim's Affiliate 2 Clicks</div>
<div style="position:absolute;left:756px;top:660px;width:32.3px;height:6px;background:#6cc4ae;"></div><div style="position:absolute;top:650px;font-size:19.7px;line-height:26px;color:#666;white-space:nowrap;letter-spacing:0.16px;left:798px;">Tim's Affiliate 2 Conversions</div>
<div style="position:absolute;left:1066px;top:660px;width:32.3px;height:6px;background:#f8772a;"></div><div style="position:absolute;top:650px;font-size:19.7px;line-height:26px;color:#666;white-space:nowrap;letter-spacing:0.1px;left:1108px;">Aldo AFF training Clicks</div>
<div style="position:absolute;left:501.7px;top:692px;width:32.3px;height:4px;background:#4bb7e0;"></div><div style="position:absolute;top:680px;font-size:19.7px;line-height:26px;color:#666;white-space:nowrap;letter-spacing:0.07px;left:543.7px;">Aldo AFF training Conversions</div>
<div style="position:absolute;left:1476px;top:620px;width:50px;height:52px;background:#cccccc;"></div>
<div style="position:absolute;left:1578px;top:620px;width:100px;height:52px;background:#cccccc;"></div>
<svg style="left:1476px;top:620px" width="50" height="52" viewBox="1476 620 50 52">
<circle cx="1502" cy="645.8" r="16.9" fill="none" stroke="#ababab" stroke-width="2"/><line x1="1502.00" y1="634.20" x2="1502.00" y2="631.40" stroke="#ababab" stroke-width="1"/><line x1="1510.77" y1="637.03" x2="1512.18" y2="635.62" stroke="#ababab" stroke-width="1"/><line x1="1513.60" y1="645.80" x2="1516.40" y2="645.80" stroke="#ababab" stroke-width="1"/><line x1="1510.77" y1="654.57" x2="1512.18" y2="655.98" stroke="#ababab" stroke-width="1"/><line x1="1502.00" y1="657.40" x2="1502.00" y2="660.20" stroke="#ababab" stroke-width="1"/><line x1="1493.23" y1="654.57" x2="1491.82" y2="655.98" stroke="#ababab" stroke-width="1"/><line x1="1490.40" y1="645.80" x2="1487.60" y2="645.80" stroke="#ababab" stroke-width="1"/><line x1="1493.23" y1="637.03" x2="1491.82" y2="635.62" stroke="#ababab" stroke-width="1"/>
<path d="M1502 640.2 V648.4 L1510 646.6" fill="none" stroke="#ababab" stroke-width="1.6"/></svg>
<svg style="left:1530px;top:624px" width="46" height="46" viewBox="1530 624 46 46">
<path d="M1536 633.2 H1568 A2 2 0 0 1 1570 635.2 V664 H1534 V635.2 A2 2 0 0 1 1536 633.2 Z" fill="#e9168c"/>
<rect x="1536.8" y="641.2" width="30.6" height="20.3" fill="#fff"/>
<rect x="1538.6" y="627.2" width="5" height="11.4" rx="2.5" fill="#e9168c" stroke="#fff" stroke-width="1.2"/>
<rect x="1560.4" y="627.2" width="5" height="11.4" rx="2.5" fill="#e9168c" stroke="#fff" stroke-width="1.2"/>
<text x="1551.8" y="657.9" text-anchor="middle" font-size="17.8" font-weight="bold" fill="#e9168c" font-family="Liberation Sans, sans-serif">12</text>
</svg>
<svg style="left:1578px;top:620px" width="100" height="52" viewBox="1578 620 100 52">
<rect x="1584.3" y="629.3" width="35.4" height="33.2" fill="none" stroke="#bfbfbf" stroke-width="1"/>
<rect x="1586.2" y="631.1" width="31.8" height="5.6" fill="#aaaaaa"/><rect x="1586.2" y="647.3" width="5.5" height="4.9" fill="#aaaaaa"/><rect x="1595" y="647.3" width="5.5" height="4.9" fill="#aaaaaa"/><rect x="1603.2" y="647.3" width="5.5" height="4.9" fill="#aaaaaa"/><rect x="1612" y="647.3" width="5.5" height="4.9" fill="#aaaaaa"/>
<rect x="1634.3" y="629.3" width="35.4" height="33.2" fill="none" stroke="#bfbfbf" stroke-width="1"/>
<rect x="1636.2" y="631.1" width="31.8" height="5.6" fill="#aaaaaa"/><rect x="1636.2" y="639.3" width="5.5" height="5" fill="#aaaaaa"/><rect x="1636.2" y="647.3" width="5.5" height="5" fill="#aaaaaa"/><rect x="1636.2" y="655.2" width="5.5" height="5" fill="#aaaaaa"/><rect x="1645" y="639.3" width="5.5" height="5" fill="#aaaaaa"/><rect x="1645" y="647.3" width="5.5" height="5" fill="#aaaaaa"/><rect x="1645" y="655.2" width="5.5" height="5" fill="#aaaaaa"/><rect x="1653.5" y="639.3" width="5.5" height="5" fill="#aaaaaa"/><rect x="1653.5" y="647.3" width="5.5" height="5" fill="#aaaaaa"/><rect x="1653.5" y="655.2" width="5.5" height="5" fill="#aaaaaa"/><rect x="1662" y="639.3" width="5.5" height="5" fill="#aaaaaa"/><rect x="1662" y="647.3" width="5.5" height="5" fill="#aaaaaa"/><rect x="1662" y="655.2" width="5.5" height="5" fill="#aaaaaa"/>
</svg>
<div style="position:absolute;left:1704px;top:664px;width:360px;height:46px;background:#fff;border:2px solid #ccc;"></div>
<div style="position:absolute;left:2022px;top:666px;width:41px;height:2px;background:#c0c0c0;"></div>
<div style="position:absolute;left:1704px;top:620px;width:450px;height:46px;background:#fff;border:2px solid #ccc;"></div>
<div style="position:absolute;top:626px;font-size:26px;line-height:34px;color:#666;white-space:nowrap;letter-spacing:-0.3px;left:1716px;">clicks</div>
<svg style="left:2119.5px;top:632.5px" width="24" height="20" viewBox="2119.5 632.5 24 20"><path d="M2124.3 637.8 L2131.5 646.0 L2138.7 637.8" fill="none" stroke="#6c6c6c" stroke-width="4.2"/></svg>
<div style="position:absolute;top:625px;font-size:28px;line-height:35px;color:#666;white-space:nowrap;left:2171px;">and</div>
<div style="position:absolute;top:670px;font-size:26px;line-height:34px;color:#666;white-space:nowrap;letter-spacing:-0.35px;left:1716px;">conversions</div>
<svg style="left:2029px;top:676.5px" width="24" height="20" viewBox="2029 676.5 24 20"><path d="M2033.8 681.8 L2041 690.0 L2048.2 681.8" fill="none" stroke="#6c6c6c" stroke-width="4.2"/></svg>
<div style="position:absolute;top:1505px;font-size:25px;line-height:32px;color:#666;white-space:nowrap;left:462px;">Source</div>
<svg style="left:2485px;top:1548px" width="45" height="16" viewBox="2485 1548 45 16"><circle cx="2494" cy="1555.7" r="3.5" fill="#666"/><circle cx="2507.7" cy="1555.7" r="3.5" fill="#666"/><circle cx="2521.5" cy="1555.7" r="3.5" fill="#666"/></svg>
</div></body></html>
